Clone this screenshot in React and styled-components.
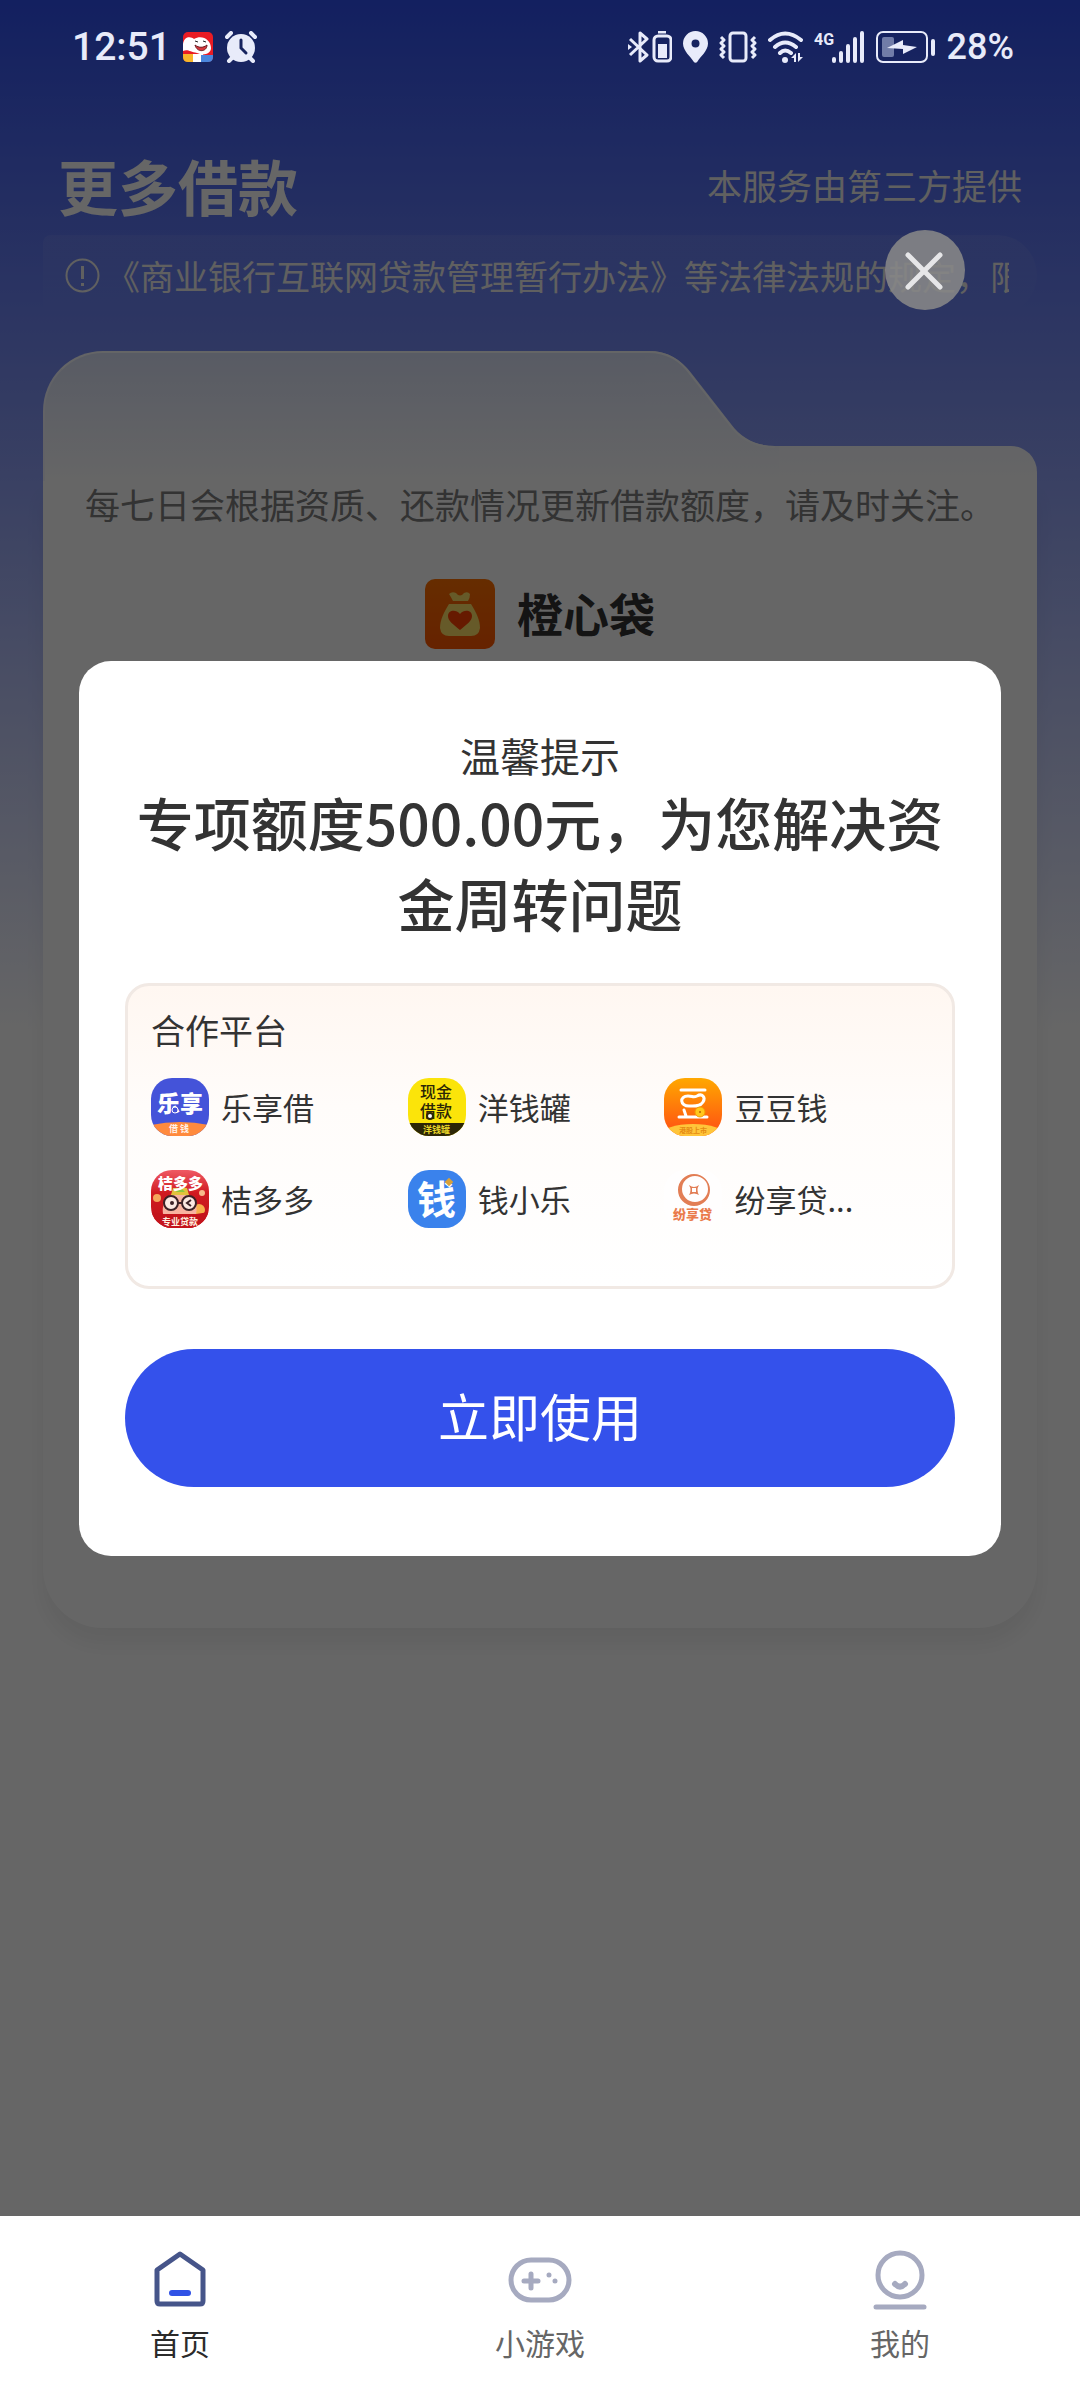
import styled, { createGlobalStyle } from "styled-components"


const GlobalStyle = createGlobalStyle`
  * {
    box-sizing: border-box;
  }
  body {
    margin: 0;
    font-family: "Noto Sans CJK SC", "Noto Sans", sans-serif;
    color: #333333;
  }
  h1, h2, p, ul {
    margin: 0;
    padding: 0;
  }
  button {
    border: none;
    padding: 0;
    font-family: inherit;
  }
`;

const Page = styled.div`
  display: flex;
  flex-direction: column;
  min-height: 100vh;
`;
const Screen = styled.main`
  position: relative;
  flex: 1;
  background: #ffffff linear-gradient(#3050f0, #ffffff) no-repeat;
  background-size: 100% 1030px;
`;

// status bar
const StatusBar = styled.header`
  position: relative;
  z-index: 2;
  display: flex;
  justify-content: space-between;
  align-items: center;
  height: 94px;
  padding: 0 66px 0 72px;
  color: #e8ebfa;
  font-family: Roboto, sans-serif;
  font-weight: 500;
`;
const StatusGroup = styled.div`
  display: flex;
  align-items: center;
  gap: ${({ $gap }) => $gap};
  font-size: ${({ $size }) => $size};
  svg {
    display: block;
  }
`;

// page head
const Head = styled.div`
  display: flex;
  justify-content: space-between;
  align-items: center;
  padding: 44px 58px 3px;
  line-height: 94px;
  color: #ffffff;
`;
const Title = styled.h1`
  font-size: 60px;
  font-weight: 700;
`;
const Provider = styled.p`
  font-size: 35px;
  color: #f0f0f0;
`;
const Notice = styled.div`
  display: flex;
  align-items: center;
  gap: 6px;
  height: 80px;
  margin: 0 43px 36px;
  padding: 0 28px 0 22px;
  border-radius: 8px 40px 40px 8px;
  background: linear-gradient(rgba(255, 255, 255, 0.07), rgba(255, 255, 255, 0));
  color: #f0f0f0;
  svg {
    flex: none;
  }
`;
const NoticeText = styled.p`
  overflow: hidden;
  white-space: nowrap;
  font-size: 34px;
`;

// folder shaped card
const Card = styled.section`
  margin: 0 43px;
`;
const CardTop = styled.div`
  display: flex;
  align-items: flex-end;
  height: 130px;
  svg {
    flex: none;
    display: block;
  }
`;
const CardTab = styled.div`
  flex: 1;
  height: 130px;
  border-top: 2px solid #fbfcff;
  border-left: 2px solid #f4f6ff;
  border-radius: 60px 0 0 0;
  background: linear-gradient(#dce3fa, #ffffff);
`;
const CardShoulder = styled.div`
  width: 258px;
  height: 35px;
  border-radius: 0 26px 0 0;
  background: linear-gradient(#f8f9fe, #ffffff);
`;
const CardBody = styled.div`
  min-height: 1147px;
  padding: 2px 0;
  border-radius: 0 0 60px 60px;
  background: #ffffff;
  box-shadow: 0 16px 20px rgba(0, 0, 0, 0.06);
  text-align: center;
`;
const CardTip = styled.p`
  font-size: 35px;
  line-height: 42px;
  color: #808080;
  white-space: nowrap;
`;
const Brand = styled.div`
  display: flex;
  justify-content: center;
  align-items: center;
  gap: 22px;
  margin-top: 54px;
`;
const BrandName = styled.h2`
  padding-bottom: 3px;
  font-size: 46px;
  line-height: 67px;
  font-weight: 700;
`;

// dialog
const Overlay = styled.div`
  position: absolute;
  inset: 0;
  display: flex;
  align-items: center;
  padding: 0 79px;
  background: rgba(0, 0, 0, 0.6);
`;
const CloseButton = styled.button`
  position: absolute;
  top: 230px;
  right: 115px;
  width: 80px;
  height: 80px;
  border-radius: 50%;
  background: rgba(136, 136, 136, 0.88);
  svg {
    display: block;
  }
`;
const Dialog = styled.div`
  width: 100%;
  padding: 68px 46px 69px;
  border-radius: 32px;
  background: #ffffff;
  text-align: center;
`;
const DialogTitle = styled.p`
  font-size: 40px;
  line-height: 52px;
`;
const DialogText = styled.h2`
  font-size: 57px;
  line-height: 81px;
  font-weight: 500;
`;
const Partners = styled.section`
  margin: 40px 0 60px;
  padding: 20px 23px 58px;
  border: 3px solid #f1e9e4;
  border-radius: 24px;
  background: linear-gradient(#fff7f1, #fffcfa 40%, #ffffff);
  text-align: left;
`;
const PartnersLabel = styled.p`
  font-size: 34px;
  line-height: 48px;
`;
const PartnerList = styled.ul`
  display: grid;
  grid-template-columns: repeat(3, 33%);
  row-gap: 34px;
  margin-top: 24px;
  list-style: none;
`;
const Partner = styled.li`
  display: flex;
  align-items: center;
  gap: 12px;
  height: 58px;
  font-size: 31px;
`;
const Logo = styled.svg`
  flex: none;
  width: 58px;
  height: 58px;
  border-radius: 21px;
  font-weight: 700;
`;
const UseButton = styled.button`
  display: block;
  width: 100%;
  height: 138px;
  padding-bottom: 6px;
  border-radius: 69px;
  background: #3451eb;
  color: #ffffff;
  font-size: 51px;
`;

// bottom tabs
const TabBar = styled.nav`
  display: grid;
  grid-template-columns: repeat(3, 1fr);
  background: #ffffff;
`;
const TabLink = styled.a`
  display: flex;
  flex-direction: column;
  align-items: center;
  gap: 10px;
  padding: 32px 0 38px;
  font-size: 30px;
  line-height: 40px;
  text-decoration: none;
  color: ${({ $active }) => ($active ? "#2b2b2b" : "#666666")};
`;


const LexiangLogo = () => (
  <Logo viewBox="0 0 58 58">
    <rect width="58" height="58" fill="#4453d9" />
    <path d="M0 47Q29 41 58 47V58H0Z" fill="#ff8a3d" />
    <text x="6" y="34" fontSize="23" fontWeight="900" fill="#fff">乐享</text>
    <circle cx="24" cy="32" r="3" fill="#4453d9" stroke="#fff" strokeWidth="1" />
    <text x="18" y="54" fontSize="9" fill="#fff" fillOpacity="0.9">借 钱</text>
  </Logo>
)

const YangqianLogo = () => (
  <Logo viewBox="0 0 58 58">
    <rect width="58" height="58" fill="#fbe40a" />
    <rect y="45" width="58" height="13" fill="#2c2606" />
    <text x="12" y="20" fontSize="16" fontWeight="500" fill="#2c2606">现金</text>
    <text x="12" y="39" fontSize="16" fontWeight="500" fill="#2c2606">借款</text>
    <circle cx="22" cy="38" r="3" fill="#fff" stroke="#2c2606" strokeWidth="2" />
    <text x="15" y="55" fontSize="9" fill="#e8d52a">洋钱罐</text>
  </Logo>
)

const DoudouLogo = () => (
  <Logo viewBox="0 0 58 58">
    <defs>
      <linearGradient id="doudou" x1="0" y1="0" x2="0" y2="1">
        <stop offset="0" stopColor="#ffa800" />
        <stop offset="0.8" stopColor="#ff5e10" />
      </linearGradient>
    </defs>
    <rect width="58" height="58" fill="url(#doudou)" />
    <ellipse cx="29" cy="57" rx="32" ry="11" fill="#ffc53a" />
    <g fill="none" stroke="#fff" strokeWidth="3" strokeLinecap="round">
      <path d="M17 12H41" />
      <path d="M24 18C29 18 29 20 33 18C38 15 42 19 39 24C36 29 30 28 25 28C16 28 15 18 24 18Z" />
      <path d="M20 32L22 38M15 39H43" />
    </g>
    <circle cx="36" cy="34" r="5" fill="#ffc81e" stroke="#f59a00" strokeWidth="1" />
    <circle cx="36" cy="34" r="1" fill="#b86200" />
    <text x="15" y="55" fontSize="7" fill="#e58a12">港股上市</text>
  </Logo>
)

const JuduoLogo = () => (
  <Logo viewBox="0 0 58 58">
    <defs>
      <linearGradient id="juduo" x1="0" y1="0" x2="0" y2="1">
        <stop offset="0" stopColor="#ef5a64" />
        <stop offset="0.4" stopColor="#d01a20" />
        <stop offset="1" stopColor="#c0131b" />
      </linearGradient>
    </defs>
    <rect width="58" height="58" fill="url(#juduo)" />
    <circle cx="6" cy="28" r="4" fill="#f5a65b" />
    <circle cx="51" cy="23" r="3" fill="#f8b98a" />
    <circle cx="48" cy="40" r="6" fill="#f6b04c" />
    <path d="M12 44C10 30 20 22 29 22C39 22 48 32 45 44Z" fill="#f8b3a0" />
    <path d="M20 25L22 18L36 18L38 25Z" fill="#e2c23c" />
    <path d="M25 22L29 17L34 22Z" fill="#8cc63f" />
    <text x="7" y="19" fontSize="15" fontWeight="900" fill="#fff">桔多多</text>
    <g fill="#fbe9e2" stroke="#3b2226" strokeWidth="2">
      <circle cx="20" cy="33" r="7" />
      <circle cx="38" cy="33" r="7" />
      <path d="M27 33H31" />
    </g>
    <circle cx="21" cy="33" r="2" fill="#3b2226" />
    <path d="M40 30L36 33L40 36" fill="none" stroke="#3b2226" strokeWidth="2" />
    <path d="M0 42Q29 48 58 42V58H0Z" fill="#c4141c" />
    <text x="11" y="55" fontSize="9" fill="#fff0e0">专业贷款</text>
  </Logo>
)

const QianLogo = () => (
  <Logo viewBox="0 0 58 58">
    <rect width="58" height="58" fill="#3a82ec" />
    <text x="9" y="44" fontSize="39" fontWeight="700" fill="#fff">钱</text>
    <rect x="38" y="9" width="6" height="6" fill="#d9a13a" transform="rotate(45 41 12)" />
  </Logo>
)

const FenxiangLogo = () => (
  <Logo viewBox="0 0 58 58">
    <rect width="58" height="58" fill="#fffefe" />
    <path
      d="M30 4A16 16 0 1 0 46 20A16 16 0 0 0 30 4ZM31 6A13 13 0 1 1 31 32A13 13 0 0 1 31 6Z"
      fill="#e27e55"
      fillRule="evenodd"
    />
    <path d="M25 15Q30 19 35 15Q32 20 35 25Q30 22 25 25Q28 20 25 15ZM28 18V22H32V18Z" fill="#e27e55" fillRule="evenodd" />
    <text x="9" y="49" fontSize="13" fontWeight="900" fill="#ea7b4c">纷享贷</text>
  </Logo>
)

const partners = [
  { name: "乐享借", Icon: LexiangLogo },
  { name: "洋钱罐", Icon: YangqianLogo },
  { name: "豆豆钱", Icon: DoudouLogo },
  { name: "桔多多", Icon: JuduoLogo },
  { name: "钱小乐", Icon: QianLogo },
  { name: "纷享贷...", Icon: FenxiangLogo },
]


const StatusLeft = () => (
  <StatusGroup $gap="12px" $size="39px">
    <span>12:51</span>
    <svg width="30" height="30" viewBox="0 0 30 30">
      <rect width="30" height="30" rx="5" fill="#e91c24" />
      <path d="M0 12C1 4 8 4 11 7C19 2 28 8 28 16C28 22 20 24 14 21C7 20 5 17 0 19Z" fill="#fff" />
      <path d="M10 22H20V30H10Z" fill="#fff" />
      <path d="M12 13C16 16 20 16 24 13C24 20 14 21 12 13Z" fill="#d8373c" stroke="#6b1d22" strokeWidth="1" />
      <path d="M12 9L15 10M20 9L23 10" stroke="#222" strokeWidth="1" />
      <path d="M0 22H10V30H5Q0 30 0 25Z" fill="#f8b52a" />
      <path d="M18 23H30V25Q30 30 25 30H18Z" fill="#4a86dd" />
    </svg>
    <svg width="32" height="32" viewBox="0 0 32 32">
      <circle cx="16" cy="17" r="14" fill="#e8ebfa" />
      <path d="M2 6L6 2M30 6L26 2M4 30L7 27M28 30L25 27" stroke="#e8ebfa" strokeWidth="4" strokeLinecap="round" />
      <path d="M16 9V17L21 22" fill="none" stroke="#16235f" strokeWidth="3" strokeLinecap="round" />
    </svg>
  </StatusGroup>
)

const StatusRight = () => (
  <StatusGroup $gap="11px" $size="36px">
    <svg width="44" height="32" viewBox="0 0 44 32" fill="none" stroke="#e8ebfa">
      <path d="M2 8L19 24L12 30V2L19 8L2 24" strokeWidth="3" strokeLinejoin="round" />
      <path d="M0 13L4 16L0 19Z" fill="#e8ebfa" stroke="none" />
      <path d="M30 1H38" strokeWidth="3" />
      <rect x="26" y="5" width="17" height="25" rx="4" strokeWidth="3" />
      <rect x="30" y="13" width="9" height="14" fill="#e8ebfa" stroke="none" />
    </svg>
    <svg width="25" height="32" viewBox="0 0 25 32">
      <path
        d="M12.500 0A12.500 12.500 0 0 0 0 12.500C0 20 8 26 10.500 30.500Q12.500 33 14.500 30.500C17 26 25 20 25 12.500A12.500 12.500 0 0 0 12.500 0ZM12.500 8.500A4 4 0 1 1 12.500 16.500A4 4 0 1 1 12.500 8.500Z"
        fill="#e8ebfa"
        fillRule="evenodd"
      />
    </svg>
    <svg width="38" height="32" viewBox="0 0 38 32" fill="none" stroke="#e8ebfa" strokeWidth="3" strokeLinejoin="round">
      <rect x="11" y="2" width="16" height="28" rx="3" />
      <path d="M2 6L5 9L2 12L5 15L2 18L5 21L2 24L5 27" />
      <path d="M36 6L33 9L36 12L33 15L36 18L33 21L36 24L33 27" />
    </svg>
    <svg width="35" height="32" viewBox="1 0 35 32" fill="none" stroke="#e8ebfa" strokeWidth="4" strokeLinecap="round">
      <path d="M3 9Q18 -4 34 9M8 16Q18 7 29 16M13 22Q18 17 24 22" />
      <circle cx="18" cy="29" r="3" fill="#e8ebfa" stroke="none" />
      <path d="M24 27L29 22V31H27V27ZM31 31L36 26H33V22H31Z" fill="#e8ebfa" stroke="none" />
    </svg>
    <svg width="51" height="32" viewBox="0 0 51 32" fill="none" stroke="#e8ebfa" strokeWidth="4" strokeLinecap="round">
      <text x="0" y="14" fontSize="16" fontWeight="700" fill="#e8ebfa" stroke="none">4G</text>
      <path d="M20 28V30M27 22V30M34 15V30M41 8V30M48 2V30" />
    </svg>
    <svg width="60" height="32" viewBox="0 0 60 32">
      <rect x="1" y="1" width="50" height="30" rx="6" fill="none" stroke="#e8ebfa" strokeWidth="2" />
      <rect x="6" y="6" width="12" height="20" rx="2" fill="#717ca8" />
      <path d="M11 17L27 9V14L41 16L27 23V18Z" fill="#e8ebfa" />
      <rect x="55" y="8" width="4" height="17" rx="2" fill="#e8ebfa" />
    </svg>
    <span>28%</span>
  </StatusGroup>
)

const BagIcon = () => (
  <svg width="70" height="70" viewBox="0 0 70 70">
    <defs>
      <linearGradient id="bag" x1="0" y1="0" x2="0" y2="1">
        <stop offset="0" stopColor="#ff7000" />
        <stop offset="1" stopColor="#ff5600" />
      </linearGradient>
    </defs>
    <rect width="70" height="70" rx="10" fill="url(#bag)" />
    <path d="M24 15Q27 12 31 14Q35 19 39 14Q43 12 45 15Q45 19 43 22H28Q26 18 24 15Z" fill="#ffe068" />
    <path d="M24 25H46C51 33 55 41 55 49Q54 57 46 57H24Q16 57 15 49C15 41 19 33 24 25Z" fill="#ffe068" />
    <path d="M35 51C28 45 23 42 23 37C23 31 31 30 35 35C39 30 47 31 47 37C47 42 42 45 35 51Z" fill="#ff4200" />
  </svg>
)

const HomeIcon = () => (
  <svg width="64" height="64" viewBox="0 0 64 64" fill="none" strokeLinejoin="round" strokeLinecap="round">
    <path d="M9 22L32 6L55 22V53Q55 56 52 56H12Q9 56 9 53Z" stroke="#46558a" strokeWidth="5" />
    <path d="M24 45H40" stroke="#3052e6" strokeWidth="6" />
  </svg>
)

const GameIcon = () => (
  <svg width="64" height="64" viewBox="0 0 64 64" fill="none" stroke="#a6aac0" strokeWidth="5" strokeLinecap="round">
    <rect x="3" y="12" width="58" height="40" rx="20" />
    <path d="M16 33H30M23 26V40" />
    <path d="M41 27V27M47 33V33" />
  </svg>
)

const MineIcon = () => (
  <svg width="64" height="64" viewBox="0 0 64 64" fill="none" stroke="#a6aac0" strokeWidth="5" strokeLinecap="round">
    <circle cx="32" cy="27" r="22" />
    <path d="M27 36Q32 41 37 36" strokeWidth="6" />
    <path d="M8 59H56" />
  </svg>
)

const tabs = [
  { label: "首页", Icon: HomeIcon, active: true },
  { label: "小游戏", Icon: GameIcon },
  { label: "我的", Icon: MineIcon },
]


const App = () => {
  return (
    <Page>
      <GlobalStyle />
      <Screen>
        <StatusBar>
          <StatusLeft />
          <StatusRight />
        </StatusBar>
        <Head>
          <Title>更多借款</Title>
          <Provider>本服务由第三方提供</Provider>
        </Head>
        <Notice>
          <svg width="35" height="35" viewBox="0 0 35 35" fill="none" stroke="#f0f0f0" strokeWidth="2">
            <circle cx="17.500" cy="17.500" r="16" />
            <path d="M17.500 8V21M17.500 25V28" strokeWidth="3" />
          </svg>
          <NoticeText>《商业银行互联网贷款管理暂行办法》等法律法规的规定，限制</NoticeText>
        </Notice>
        <Card>
          <CardTop>
            <CardTab />
            <svg width="134" height="130" viewBox="0 0 134 130">
              <defs>
                <linearGradient id="slope" x1="0" y1="0" x2="0" y2="130" gradientUnits="userSpaceOnUse">
                  <stop offset="0" stopColor="#dce3fa" />
                  <stop offset="1" stopColor="#ffffff" />
                </linearGradient>
              </defs>
              <path d="M0 0H4C24 0 37 10 47 23L86 73C97 88 112 95 130 95H134V130H0Z" fill="url(#slope)" />
              <path d="M0 1H4C24 1 37 11 46 24L85 74C96 89 112 96 130 96" fill="none" stroke="#fbfcff" strokeWidth="2" />
            </svg>
            <CardShoulder />
          </CardTop>
          <CardBody>
            <CardTip>每七日会根据资质、还款情况更新借款额度，请及时关注。</CardTip>
            <Brand>
              <BagIcon />
              <BrandName>橙心袋</BrandName>
            </Brand>
          </CardBody>
        </Card>
        <Overlay>
          <CloseButton aria-label="关闭">
            <svg width="80" height="80" viewBox="0 0 80 80" stroke="#e6e6e8" strokeWidth="5" strokeLinecap="round">
              <path d="M23 25L55 57M55 25L23 57" />
            </svg>
          </CloseButton>
          <Dialog role="dialog" aria-modal="true">
            <DialogTitle>温馨提示</DialogTitle>
            <DialogText>专项额度500.00元，为您解决资金周转问题</DialogText>
            <Partners>
              <PartnersLabel>合作平台</PartnersLabel>
              <PartnerList>
                {partners.map(({ name, Icon }) => (
                  <Partner key={name}>
                    <Icon />
                    <span>{name}</span>
                  </Partner>
                ))}
              </PartnerList>
            </Partners>
            <UseButton>立即使用</UseButton>
          </Dialog>
        </Overlay>
      </Screen>
      <TabBar>
        {tabs.map(({ label, Icon, active }) => (
          <TabLink key={label} href="#" $active={active}>
            <Icon />
            {label}
          </TabLink>
        ))}
      </TabBar>
    </Page>
  )
}

export default App
